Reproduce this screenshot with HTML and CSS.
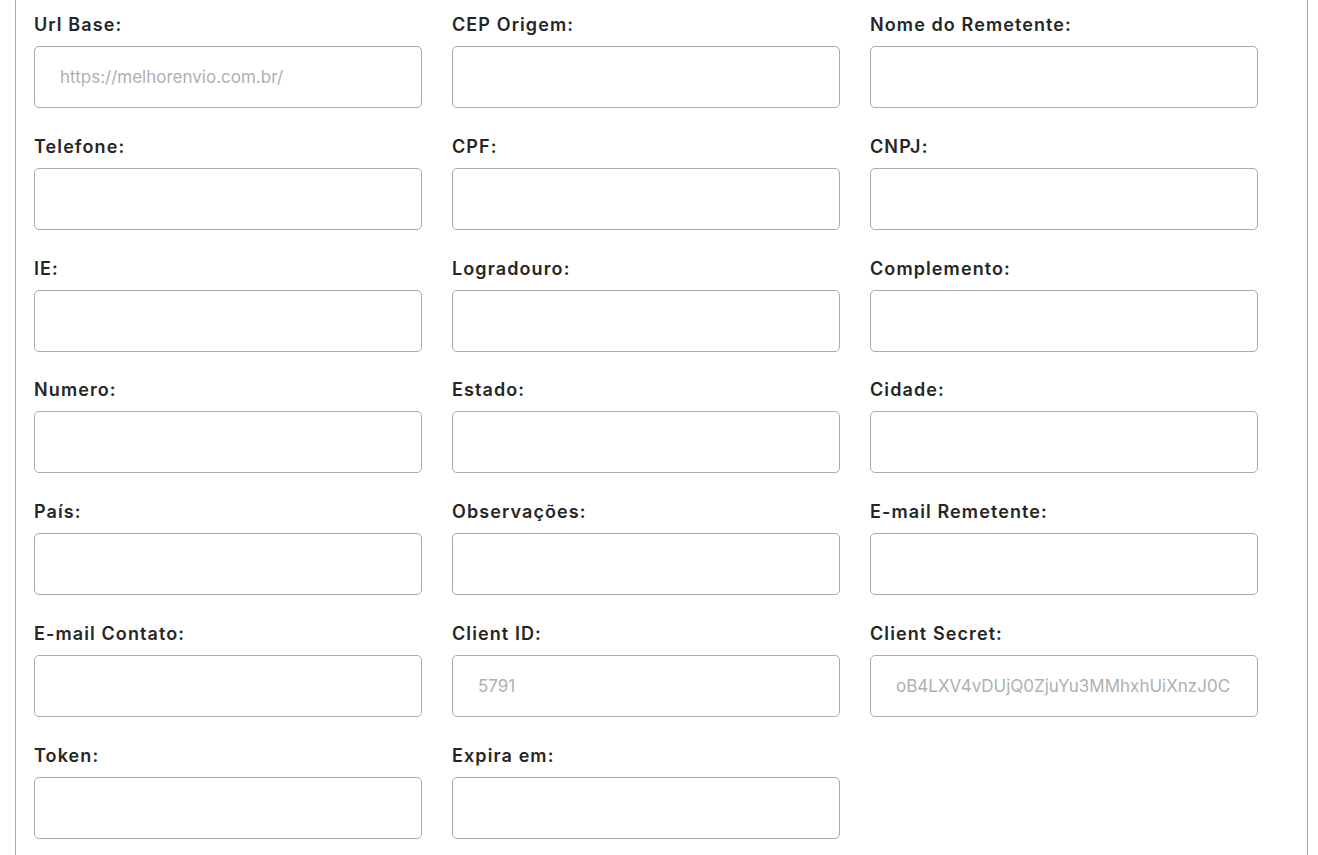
FILE: index.html
```html
<!DOCTYPE html>
<html lang="pt-BR">
<head>
    <meta charset="UTF-8">
    <title>Configurações Melhor Envio</title>
    <link rel="stylesheet" href="styles.css">
</head>
<body>
<div class="panel">
    <form class="form-grid">
        <div class="field">
            <label>Url Base:</label>
            <input type="text" placeholder="https://melhorenvio.com.br/">
        </div>
        <div class="field">
            <label>CEP Origem:</label>
            <input type="text">
        </div>
        <div class="field">
            <label>Nome do Remetente:</label>
            <input type="text">
        </div>
        <div class="field">
            <label>Telefone:</label>
            <input type="text">
        </div>
        <div class="field">
            <label>CPF:</label>
            <input type="text">
        </div>
        <div class="field">
            <label>CNPJ:</label>
            <input type="text">
        </div>
        <div class="field">
            <label>IE:</label>
            <input type="text">
        </div>
        <div class="field">
            <label>Logradouro:</label>
            <input type="text">
        </div>
        <div class="field">
            <label>Complemento:</label>
            <input type="text">
        </div>
        <div class="field">
            <label>Numero:</label>
            <input type="text">
        </div>
        <div class="field">
            <label>Estado:</label>
            <input type="text">
        </div>
        <div class="field">
            <label>Cidade:</label>
            <input type="text">
        </div>
        <div class="field">
            <label>País:</label>
            <input type="text">
        </div>
        <div class="field">
            <label>Observações:</label>
            <input type="text">
        </div>
        <div class="field">
            <label>E-mail Remetente:</label>
            <input type="text">
        </div>
        <div class="field">
            <label>E-mail Contato:</label>
            <input type="text">
        </div>
        <div class="field">
            <label>Client ID:</label>
            <input type="text" placeholder="5791">
        </div>
        <div class="field">
            <label>Client Secret:</label>
            <input type="text" placeholder="oB4LXV4vDUjQ0ZjuYu3MMhxhUiXnzJ0C">
        </div>
        <div class="field">
            <label>Token:</label>
            <input type="text">
        </div>
        <div class="field">
            <label>Expira em:</label>
            <input type="text">
        </div>
    </form>
</div>
</body>
</html>
```

FILE: styles.css
```css
html{
    height: 100%;
}
body{
    height: 100%;
    margin: 0;
    padding: 0;
    background-color: #ffffff;
    font-family: "Inter", "Open Sans", sans-serif;
}
.panel{
    box-sizing: border-box;
    width: 1293px;
    min-height: 100%;
    margin-left: 15px;
    padding: 11px 49px 0 18px;
    border-left: 1px solid #aaaaaa;
    border-right: 1px solid #aaaaaa;
}
.form-grid{
    display: grid;
    grid-template-columns: 388px 388px 388px;
    column-gap: 30px;
    row-gap: 24.8px;
    margin: 0;
}
.field{
    display: flex;
    flex-direction: column;
}
.field label{
    height: 26px;
    padding-top: 1px;
    line-height: 26px;
    margin-bottom: 8px;
    font-size: 18px;
    font-weight: 600;
    letter-spacing: 1.1px;
    color: #262626;
}
.field input{
    box-sizing: border-box;
    width: 100%;
    height: 62px;
    padding: 0 25px;
    border: 1px solid #ababab;
    border-radius: 5px;
    font-family: inherit;
    font-size: 17px;
    color: #333333;
    outline: none;
}
.field input::placeholder{
    color: #b0b0b0;
}
```
